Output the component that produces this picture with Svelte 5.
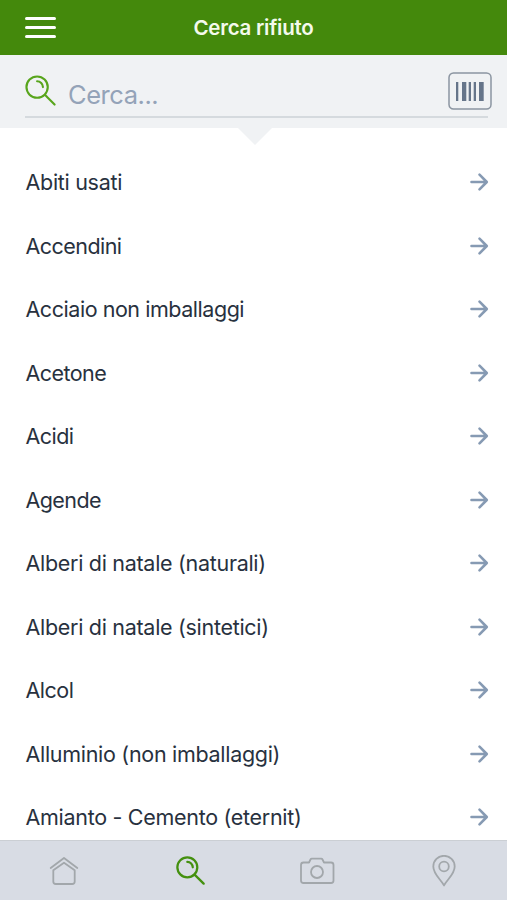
<script lang="ts">
	interface WasteItem {
		name: string;
		spacing?: number;
	}

	let query = $state('');
	let activeTab = $state('search');

	const items: WasteItem[] = [
		{ name: 'Abiti usati' },
		{ name: 'Accendini', spacing: -0.55 },
		{ name: 'Acciaio non imballaggi', spacing: -0.46 },
		{ name: 'Acetone', spacing: -0.56 },
		{ name: 'Acidi', spacing: -0.55 },
		{ name: 'Agende', spacing: -0.58 },
		{ name: 'Alberi di natale (naturali)' },
		{ name: 'Alberi di natale (sintetici)' },
		{ name: 'Alcol', spacing: -0.5 },
		{ name: 'Alluminio (non imballaggi)' },
		{ name: 'Amianto - Cemento (eternit)' }
	];

	const tabs = ['home', 'search', 'camera', 'places'];

	let filtered = $derived(
		items.filter((item) => item.name.toLowerCase().includes(query.toLowerCase()))
	);
</script>

{#snippet magnifier(size: number)}
	<svg class="magnifier" width={size} height={size} viewBox="0 0 32 32">
		<circle cx="12.5" cy="12.5" r="11" />
		<path d="M20.5 20.5 30.5 30.5" />
		<path d="M12.5 6.5a6 6 0 0 1 6 6" />
	</svg>
{/snippet}

<div class="app">
	<header class="topbar">
		<button class="menu" aria-label="Menu">
			<span></span>
			<span></span>
			<span></span>
		</button>
		<h1>Cerca rifiuto</h1>
	</header>

	<div class="search">
		<div class="field">
			{@render magnifier(31)}
			<input type="text" placeholder="Cerca..." bind:value={query} />
		</div>
		<button class="barcode" aria-label="Barcode">
			<svg width="44" height="38" viewBox="0 0 44 38">
				<rect class="frame" x="1" y="1" width="42" height="36" rx="4.5" />
				<path class="bars" d="M8 10h2.3v19H8zM14 10h4.3v19H14zM20.7 10H23v19h-2.300zM25.700 10H28v19h-2.300zM31 10h4.700v19H31z" />
			</svg>
		</button>
	</div>

	<ul class="list">
		{#each filtered as item}
			<li>
				<span style:letter-spacing="{item.spacing ?? -0.3}px">{item.name}</span>
				<svg class="arrow" width="20" height="20" viewBox="0 0 20 20">
					<path d="M2.500 10h15.200M10.500 2.700 17.800 10l-7.300 7.300" />
				</svg>
			</li>
		{/each}
	</ul>

	<nav class="tabs">
		{#each tabs as tab}
			<button class:active={activeTab === tab} aria-label={tab} onclick={() => (activeTab = tab)}>
				{#if tab === 'home'}
					<svg class="home" width="30" height="30" viewBox="0 0 30 30">
						<path d="M1.700 12 15 2l13.300 10" />
						<path d="M4.300 14.200 15 6.700l10.700 7.500v11.300q0 2.500-2.500 2.500H6.800q-2.500 0-2.500-2.500z" />
					</svg>
				{:else if tab === 'search'}
					{@render magnifier(29)}
				{:else if tab === 'camera'}
					<svg width="36" height="30" viewBox="0 0 36 30">
						<path d="M4.500 6.500H10l1.500-3q.4-.8 1.300-.8h9.400q.9 0 1.300.8l1.500 3h7q2.500 0 2.500 2.500v15.500q0 2.500-2.500 2.500H4.500Q2 27 2 24.500V9q0-2.500 2.500-2.500z" />
						<circle cx="18" cy="16" r="6" />
					</svg>
				{:else}
					<svg width="26" height="32" viewBox="0 0 26 32">
						<path d="M13 30.500C10.500 25 2.300 19.500 2.300 11.500a10.700 10.700 0 0 1 21.400 0C23.700 19.500 15.500 25 13 30.500z" />
						<circle cx="13" cy="11.500" r="4.800" />
					</svg>
				{/if}
			</button>
		{/each}
	</nav>
</div>

<style>
	:global(body) {
		margin: 0;
	}

	.app {
		display: flex;
		flex-direction: column;
		height: 900px;
		overflow: hidden;
		background: #fff;
		color: #28313e;
		font-family: Inter, 'Liberation Sans', sans-serif;
	}

	button {
		padding: 0;
		border: 0;
		background: none;
		cursor: pointer;
	}

	svg {
		display: block;
		flex: none;
		fill: none;
		stroke-linecap: round;
		stroke-linejoin: round;
	}

	.topbar {
		display: grid;
		grid-template-columns: 56px 1fr 56px;
		align-items: center;
		flex: none;
		height: 55px;
		background: #44890c;
	}

	.menu {
		display: flex;
		flex-direction: column;
		gap: 6px;
		width: 31px;
		margin-left: 25px;
	}

	.menu span {
		height: 3px;
		border-radius: 2px;
		background: #fff;
	}

	h1 {
		margin: 0;
		color: #f4faec;
		font-size: 20.5px;
		font-weight: 600;
		letter-spacing: -0.25px;
		line-height: 55px;
		text-align: center;
	}

	.search {
		position: relative;
		flex: none;
		box-sizing: border-box;
		height: 73px;
		padding: 0 19px 0 25px;
		background: #f0f2f4;
	}

	/* Notch pointing at the list */
	.search::after {
		content: '';
		position: absolute;
		top: 100%;
		left: 238px;
		border: solid transparent;
		border-width: 17px 17px 0;
		border-top-color: #f0f2f4;
	}

	.field {
		display: flex;
		align-items: center;
		gap: 12px;
		box-sizing: border-box;
		height: 63px;
		padding-top: 12px;
		border-bottom: 2px solid #d5dade;
	}

	.field .magnifier {
		margin-top: -2px;
	}

	input {
		flex: 1;
		min-width: 0;
		padding: 5px 0 0;
		border: 0;
		outline: 0;
		background: none;
		color: #28313e;
		font: 400 25.5px Inter, 'Liberation Sans', sans-serif;
		letter-spacing: -0.45px;
	}

	input::placeholder {
		color: #94a3b8;
		opacity: 1;
	}

	.magnifier {
		stroke: #58a51c;
		stroke-width: 2.2;
	}

	.barcode {
		position: absolute;
		top: 17px;
		right: 15px;
	}

	.frame {
		fill: #f0f2f4;
		stroke: #8b95a1;
		stroke-width: 1.5;
	}

	.bars {
		fill: #66758a;
	}

	.list {
		flex: 1;
		min-height: 0;
		margin: 0;
		padding: 22.5px 18px 0 25.5px;
		overflow: hidden;
		list-style: none;
	}

	li {
		display: flex;
		align-items: center;
		justify-content: space-between;
		height: 63.5px;
		font-size: 21.5px;
		white-space: nowrap;
	}

	.arrow {
		stroke: #869ab3;
		stroke-width: 2.6;
	}

	.tabs {
		display: grid;
		grid-template-columns: repeat(4, 1fr);
		flex: none;
		box-sizing: border-box;
		height: 60px;
		border-top: 1px solid #cbcfd4;
		background: #d8dce4;
	}

	.tabs button {
		display: flex;
		align-items: center;
		justify-content: center;
		padding-left: 1px;
	}

	.tabs svg {
		stroke: #a2a7ab;
		stroke-width: 1.8;
	}

	.tabs .home {
		margin-left: 1px;
	}

	.tabs .active svg {
		stroke: #44900f;
		stroke-width: 2.5;
	}
</style>
